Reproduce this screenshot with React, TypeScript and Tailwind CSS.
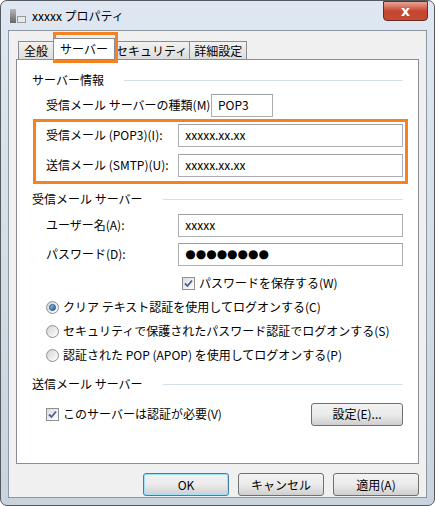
import React from "react";

const F = { fontFamily: '"Noto Sans CJK JP", "Liberation Sans", sans-serif' };

function Input({ value, w = "w-[226px]", dots = false }: { value: string; w?: string; dots?: boolean }) {
  return (
    <div className={`${w} h-[23px] border border-[#abadb3] border-t-[#a0a0a0] bg-white flex items-center px-[6px] text-[12px] text-black`}>
      {dots ? <span className="text-[12px] tracking-[0px] leading-none" style={{ fontFamily: '"DejaVu Sans", sans-serif' }}>●●●●●●●●</span> : value}
    </div>
  );
}

function Section({ title }: { title: string }) {
  return (
    <div className="flex items-center gap-[8px] h-[20px]">
      <span>{title}</span>
      <div className="flex-1 border-t border-[#d5dfe5] ml-[12px]" />
    </div>
  );
}

function Check() {
  return (
    <div className="w-[13px] h-[13px] border border-[#8e8f8f] bg-gradient-to-br from-[#dcdcdc] to-white flex items-center justify-center">
      <svg width="9" height="9" viewBox="0 0 9 9"><path d="M1 4.5 L3.5 7 L8 1.5" stroke="#4a5f97" strokeWidth="1.8" fill="none" /></svg>
    </div>
  );
}

function Radio({ on }: { on?: boolean }) {
  return (
    <div className="w-[13px] h-[13px] rounded-full border border-[#8e8f8f] bg-gradient-to-br from-[#d4d4d4] to-white flex items-center justify-center">
      {on && <div className="w-[7px] h-[7px] rounded-full bg-gradient-to-br from-[#8fd0f5] to-[#175ea8] border border-[#1c4f84]" />}
    </div>
  );
}

function Btn({ children, w, def }: { children: React.ReactNode; w: string; def?: boolean }) {
  return (
    <div className={`${w} h-[23px] rounded-[3px] border ${def ? "border-[#3c7fb1] shadow-[inset_0_0_0_1px_#9fe1fb]" : "border-[#707070]"} bg-gradient-to-b from-[#f2f2f2] via-[#ebebeb] to-[#cfcfcf] flex items-center justify-center text-[12px]`}>
      {children}
    </div>
  );
}

export default function App() {
  return (
    <div style={F} className="w-[435px] h-[506px] bg-white text-[12px] text-black">
      <div className="relative w-[435px] h-[506px] rounded-[7px] border border-[#555a60] bg-gradient-to-b from-[#dfe8f2] via-[#d5dde6] to-[#c9d3de] flex flex-col px-[7px] pb-[7px]">
        <div className="h-[29px] flex items-center pl-[2px] relative">
          <div className="w-[16px] h-[14px] flex gap-[1px] items-end mr-[6px]">
            <div className="w-[6px] h-[14px] bg-gradient-to-b from-[#b8b8b8] to-[#666]" />
            <div className="w-[9px] h-[7px] bg-[#e8e8e8] border border-[#999]" />
          </div>
          <span className="text-[12px]">xxxxx プロパティ</span>
          <div className="absolute right-[-1px] top-0 w-[45px] h-[20px] rounded-b-[4px] border border-[#6b2b24] bg-gradient-to-b from-[#e6a396] via-[#c8452f] to-[#c24c34] flex items-center justify-center">
            <span className="text-white font-bold text-[14px] leading-none" style={{ fontFamily: '"DejaVu Sans", sans-serif' }}>x</span>
          </div>
        </div>
        <div className="flex-1 bg-[#f0f0f0] border border-[#8c97a4] px-[7px] pt-[8px] flex flex-col relative">
          <div className="flex items-end h-[20px] pl-[2px]">
            <div className="h-[18px] px-[5px] border border-[#898c95] border-b-0 bg-gradient-to-b from-[#f2f2f2] to-[#dcdcdc] flex items-center">全般</div>
            <div className="h-[21px] px-[6px] border border-[#898c95] border-b-0 bg-white flex items-center -mx-[1px] z-10">サーバー</div>
            <div className="h-[18px] px-[2px] border border-[#898c95] border-b-0 border-l-0 bg-gradient-to-b from-[#f2f2f2] to-[#dcdcdc] flex items-center">セキュリティ</div>
            <div className="h-[18px] px-[4px] border border-[#898c95] border-b-0 border-l-0 bg-gradient-to-b from-[#f2f2f2] to-[#dcdcdc] flex items-center">詳細設定</div>
          </div>
          <div className="h-[405px] bg-white border border-[#898c95] px-[15px] pt-[10px] flex flex-col">
            <Section title="サーバー情報" />
            <div className="flex items-center h-[24px] mt-[3px] pl-[14px]">
              <span className="w-[165px] whitespace-nowrap">受信メール サーバーの種類(M)</span>
              <Input value="POP3" w="w-[62px]" />
            </div>
            <div className="flex items-center h-[24px] mt-[6px] pl-[14px]">
              <span className="w-[133px]">受信メール (POP3)(I):</span>
              <Input value="xxxxx.xx.xx" />
            </div>
            <div className="flex items-center h-[24px] mt-[6px] pl-[14px]">
              <span className="w-[133px]">送信メール (SMTP)(U):</span>
              <Input value="xxxxx.xx.xx" />
            </div>
            <div className="mt-[12px]"><Section title="受信メール サーバー" /></div>
            <div className="flex items-center h-[24px] mt-[4px] pl-[14px]">
              <span className="w-[133px]">ユーザー名(A):</span>
              <Input value="xxxxx" />
            </div>
            <div className="flex items-center h-[24px] mt-[5px] pl-[14px]">
              <span className="w-[133px]">パスワード(D):</span>
              <Input value="" dots />
            </div>
            <div className="flex items-center gap-[4px] h-[18px] mt-[8px] pl-[150px]"><Check /><span>パスワードを保存する(W)</span></div>
            <div className="flex flex-col gap-[6px] mt-[6px] pl-[14px]">
              <div className="flex items-center gap-[4px] h-[18px]"><Radio on /><span>クリア テキスト認証を使用してログオンする(C)</span></div>
              <div className="flex items-center gap-[4px] h-[18px]"><Radio /><span>セキュリティで保護されたパスワード認証でログオンする(S)</span></div>
              <div className="flex items-center gap-[4px] h-[18px]"><Radio /><span>認証された POP (APOP) を使用してログオンする(P)</span></div>
            </div>
            <div className="mt-[10px]"><Section title="送信メール サーバー" /></div>
            <div className="flex items-center h-[24px] mt-[8px] pl-[14px]">
              <div className="flex items-center gap-[4px] flex-1"><Check /><span>このサーバーは認証が必要(V)</span></div>
              <Btn w="w-[92px]">設定(E)...</Btn>
            </div>
          </div>
          <div className="flex justify-end gap-[9px] mt-[9px]">
            <Btn w="w-[86px]" def>OK</Btn>
            <Btn w="w-[86px]">キャンセル</Btn>
            <Btn w="w-[86px]">適用(A)</Btn>
          </div>
          <div className="absolute left-[44px] top-[1px] w-[65px] h-[31px] border-[3px] border-[#f58220]" />
          <div className="absolute left-[24px] top-[88px] w-[375px] h-[65px] border-[3px] border-[#f58220]" />
        </div>
      </div>
    </div>
  );
}
